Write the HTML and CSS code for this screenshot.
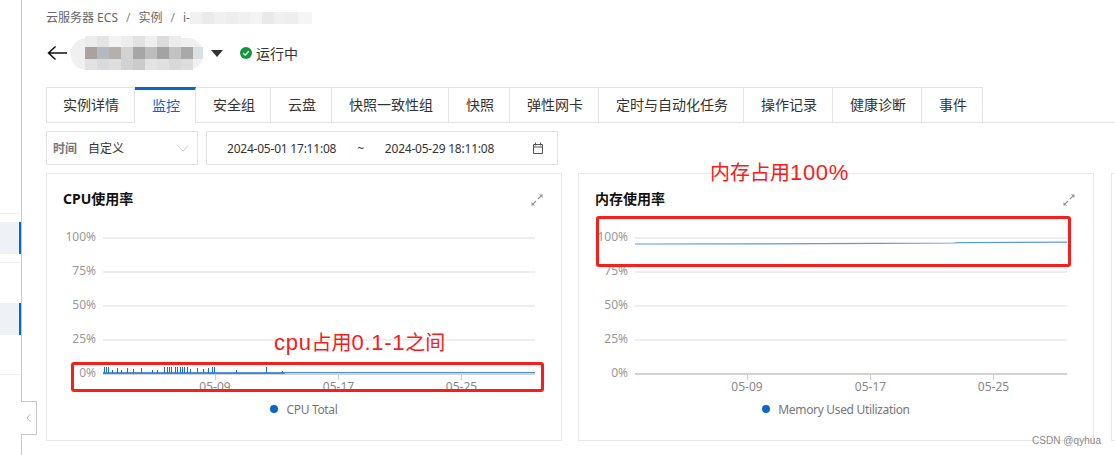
FILE: index.html
```html
<!DOCTYPE html>
<html lang="zh-CN">
<head>
<meta charset="utf-8">
<title>监控</title>
<link rel="stylesheet" href="styles.css">
</head>
<body>
<div class="page">
  <aside class="sidebar">
    <div class="side-row side-row-first"></div>
    <div class="side-item"></div>
    <div class="side-row side-row-mid"></div>
    <div class="side-item"></div>
    <div class="side-row side-row-last"></div>
    <div class="collapse">
      <svg width="6" height="10" viewBox="0 0 6 10"><path d="M4.5 1 1 5l3.5 4" fill="none" stroke="#bbb" stroke-width="1"/></svg>
    </div>
  </aside>
  <main class="main">
    <nav class="crumbs">
      <span>云服务器 ECS</span><span class="sep">/</span><span>实例</span><span class="sep">/</span><span>i-</span>
      <svg class="crumb-mosaic" width="124" height="12" viewBox="0 0 124 12">
        <rect width="12" height="12" fill="#f1f1f1"/><rect x="12" width="12" height="12" fill="#eaeaea"/><rect x="24" width="12" height="12" fill="#f0f0f0"/><rect x="36" width="12" height="12" fill="#ededed"/><rect x="48" width="12" height="12" fill="#f0f0f0"/><rect x="60" width="12" height="12" fill="#f3f3f3"/><rect x="72" width="12" height="12" fill="#e9e9e9"/><rect x="84" width="12" height="12" fill="#f0f0f0"/><rect x="96" width="12" height="12" fill="#eeeeee"/><rect x="108" width="14" height="12" fill="#f5f5f5"/>
      </svg>
    </nav>
    <header class="title-row">
      <svg class="back" width="20" height="16" viewBox="0 0 20 16"><path d="M20 8H2M8.5 1.5 1.5 8l7 6.500" fill="none" stroke="#111" stroke-width="1.500"/></svg>
      <svg class="mosaic" width="135" height="36" viewBox="0 0 135 36">
        <rect x="2" y="3" width="132" height="32" rx="15" fill="#f0f0f0"/>
        <rect x="16" y="1" width="12" height="11" fill="#ececec"/><rect x="28" y="1" width="12" height="11" fill="#e4e4e4"/><rect x="40" y="1" width="12" height="11" fill="#f3f3f3"/><rect x="52" y="1" width="12" height="11" fill="#ededed"/><rect x="64" y="1" width="12" height="11" fill="#e2e2e2"/><rect x="76" y="1" width="12" height="11" fill="#efefef"/><rect x="88" y="1" width="12" height="11" fill="#dcdcdc"/><rect x="100" y="1" width="12" height="11" fill="#ececec"/>
        <rect x="16" y="12" width="12" height="12" fill="#aaa29e"/><rect x="28" y="12" width="12" height="12" fill="#b4b9c0"/><rect x="40" y="12" width="12" height="12" fill="#b3b0ae"/><rect x="52" y="12" width="12" height="12" fill="#d2d2d2"/><rect x="64" y="12" width="12" height="12" fill="#a6a6a6"/><rect x="76" y="12" width="12" height="12" fill="#bcbcbc"/><rect x="88" y="12" width="12" height="12" fill="#a3a3a3"/><rect x="100" y="12" width="12" height="12" fill="#c2c2c2"/><rect x="112" y="12" width="12" height="12" fill="#a9a9a9"/><rect x="124" y="12" width="10" height="12" fill="#dde0e3"/>
        <rect x="16" y="24" width="12" height="11" fill="#e2e2e2"/><rect x="28" y="24" width="12" height="11" fill="#d9dadc"/><rect x="40" y="24" width="12" height="11" fill="#dedede"/><rect x="52" y="24" width="12" height="11" fill="#d2d2d2"/><rect x="64" y="24" width="12" height="11" fill="#cbcbcb"/><rect x="76" y="24" width="12" height="11" fill="#e3e3e3"/><rect x="88" y="24" width="12" height="11" fill="#e0e0e0"/><rect x="100" y="24" width="12" height="11" fill="#d8d8d8"/><rect x="112" y="24" width="12" height="11" fill="#dcdcdc"/>
      </svg>
      <svg class="caret" width="12" height="7" viewBox="0 0 12 7"><path d="M0 0h12L6 7z" fill="#333"/></svg>
      <svg class="status-dot" width="12" height="12" viewBox="0 0 12 12"><circle cx="6" cy="6" r="6" fill="#12963c"/><path d="M3.200 6.200 5.200 8 8.800 4.300" fill="none" stroke="#fff" stroke-width="1.300"/></svg>
      <span class="status-text">运行中</span>
    </header>
    <div class="tabs">
      <a class="tab">实例详情</a><a class="tab tab-active">监控</a><a class="tab">安全组</a><a class="tab">云盘</a><a class="tab">快照一致性组</a><a class="tab">快照</a><a class="tab">弹性网卡</a><a class="tab">定时与自动化任务</a><a class="tab">操作记录</a><a class="tab">健康诊断</a><a class="tab">事件</a>
    </div>
    <div class="filters">
      <div class="select">
        <span class="select-label">时间</span><span class="select-value">自定义</span>
        <svg class="chevron" width="12" height="7" viewBox="0 0 12 7"><path d="M1 .5 6 6l5-5.500" fill="none" stroke="#ccc"/></svg>
      </div>
      <div class="range">
        <span>2024-05-01 17:11:08</span><span class="tilde">~</span><span>2024-05-29 18:11:08</span>
        <svg class="calendar" width="12" height="12" viewBox="0 0 12 12"><path d="M1.500 2.500h9v9h-9zM1.500 5h9M3.500 .5v3M8.500 .5v3" fill="none" stroke="#555"/></svg>
      </div>
    </div>
    <div class="cards">
      <section class="card">
        <div class="card-head">
          <h3 class="card-title">CPU使用率</h3>
          <svg class="expand" width="12" height="12" viewBox="0 0 12 12"><path d="M7 5 11 1M5 7 1 11" stroke="#999" stroke-width="1.200"/><path d="M8 .5h3.500V4zM4 11.500H.5V8z" fill="#999"/></svg>
        </div>
        <svg class="chart" width="514" height="176" viewBox="0 0 514 176">
          <g class="grid"><path d="M56 18H488M56 52H488M56 86H488M56 120H488"/></g>
          <path class="axis" d="M56 154H488"/><path class="ticks" d="M168.500 155v5M291.500 155v5M414.500 155v5"/>
          <g class="ylabels"><text x="49" y="21">100%</text><text x="49" y="55">75%</text><text x="49" y="89">50%</text><text x="49" y="123">25%</text><text x="49" y="157">0%</text></g>
          <g class="xlabels"><text x="168" y="171">05-09</text><text x="291.500" y="171">05-17</text><text x="414.500" y="171">05-25</text></g>
          <path class="cpu-spikes" d="M57.500 153v-6M59.500 153v-6M61.500 153v-6M65.500 153v-3M70.500 153v-5M74.500 153v-3M80.500 153v-5M86.500 153v-4M94.500 153v-5M105.500 153v-3M110.500 153v-3M117.500 153v-6M120.500 153v-6M122.500 153v-6M124.500 153v-6M128.500 153v-6M130.500 153v-6M133.500 153v-6M135.500 153v-6M137.500 153v-6M140.500 153v-6M143.500 153v-4M150.500 153v-5M156.500 153v-4M161.500 153v-5M165.500 153v-6M167.500 153v-6M189.500 153v-3M219.500 153v-6M235.500 153v-2"/>
          <path class="cpu-line" d="M56 153H238"/>
          <path class="cpu-line-light" d="M238 152.500H488"/>
        </svg>
        <div class="legend"><i class="legend-dot"></i><span>CPU Total</span></div>
      </section>
      <section class="card">
        <div class="card-head">
          <h3 class="card-title">内存使用率</h3>
          <svg class="expand" width="12" height="12" viewBox="0 0 12 12"><path d="M7 5 11 1M5 7 1 11" stroke="#999" stroke-width="1.200"/><path d="M8 .5h3.500V4zM4 11.500H.5V8z" fill="#999"/></svg>
        </div>
        <svg class="chart" width="514" height="176" viewBox="0 0 514 176">
          <g class="grid"><path d="M56 18H488M56 52H488M56 86H488M56 120H488"/></g>
          <path class="axis" d="M56 154H488"/><path class="ticks" d="M168.500 155v5M291.500 155v5M414.500 155v5"/>
          <g class="ylabels"><text x="49" y="21">100%</text><text x="49" y="55">75%</text><text x="49" y="89">50%</text><text x="49" y="123">25%</text><text x="49" y="157">0%</text></g>
          <g class="xlabels"><text x="168" y="171">05-09</text><text x="291.500" y="171">05-17</text><text x="414.500" y="171">05-25</text></g>
          <path class="mem-line" d="M56 24 180 23.800 300 23.400 375 23 380 22.600 488 22.200"/>
        </svg>
        <div class="legend"><i class="legend-dot"></i><span>Memory Used Utilization</span></div>
      </section>
      <section class="card card-next"></section>
    </div>
  </main>
  <div class="note note-mem">内存占用<span class="note-num">100%</span></div>
  <div class="note note-cpu"><span class="note-num">cpu</span>占用<span class="note-num">0.1-1</span>之间</div>
  <div class="mark mark-cpu"></div>
  <div class="mark mark-mem"></div>
  <div class="watermark">CSDN @qyhua</div>
</div>
</body>
</html>
```
FILE: styles.css
```css
* { box-sizing: border-box; }
html, body { margin: 0; padding: 0; background: #fff; }
body { font-family: "Noto Sans", "Noto Sans CJK SC", sans-serif; color: #333; }
.page { position: relative; display: flex; width: 1115px; height: 455px; overflow: hidden; background: #fff; }

.sidebar { position: relative; flex: none; width: 22px; height: 455px; border-right: 1px solid #c9c9c9; }
.side-row-first { height: 214px; border-bottom: 1px solid #f1f1f1; margin-bottom: 8px; }
.side-item { height: 32px; background: #eef1f6; border-right: 2px solid #0a66c8; }
.side-row-mid { height: 41px; margin-top: 8px; border-top: 1px solid #f1f1f1; }
.side-row-last { height: 40px; border-bottom: 1px solid #f1f1f1; }
.collapse { position: absolute; left: 21px; top: 401px; width: 16px; height: 34px; display: flex; align-items: center; justify-content: center; background: #fff; border: 1px solid #c9c9c9; border-left: 0; }

.main { flex: none; width: 1093px; padding-left: 24px; }
.crumbs { display: flex; align-items: center; height: 12px; margin-top: 12px; font-size: 12px; line-height: 12px; color: #666; }
.sep { margin: 0 8px; color: #888; }
.title-row { display: flex; align-items: center; height: 36px; margin-top: 11px; }
.back { flex: none; margin-left: 1px; }
.mosaic { flex: none; margin-left: 2px; margin-right: 7px; }
.caret { flex: none; margin-top: 1px; }
.status-dot { flex: none; margin-left: 17px; }
.status-text { margin-left: 4px; font-size: 14px; color: #333; }

.tabs { display: flex; height: 36px; margin-top: 16px; margin-right: -2px; border-bottom: 1px solid #e3e3e3; }
.tab { flex: none; height: 36px; padding: 0 15px 0 17px; border: 1px solid #e3e3e3; border-left: 0; font-size: 14px; line-height: 34px; color: #333; background: #fff; }
.tab:first-child { border-left: 1px solid #e3e3e3; padding: 0 15px 0 16px; }
.tab-active { color: #0a66c8; border-top: 3px solid #0a66c8; border-bottom-color: #fff; line-height: 31px; }

.filters { display: flex; gap: 8px; margin-top: 8px; }
.select, .range { display: flex; align-items: center; height: 34px; border: 1px solid #e3e3e3; font-size: 12px; color: #333; }
.select { width: 152px; padding-left: 6px; }
.select-label { color: #777; font-weight: 600; }
.select-value { margin-left: 11px; }
.chevron { margin-left: auto; margin-right: 8px; }
.range { width: 352px; padding-left: 20px; padding-right: 13px; letter-spacing: -.22px; }
.tilde { margin: 0 21px; }
.calendar { margin-left: auto; }

.cards { display: flex; gap: 16px; margin-top: 8px; }
.card { flex: none; width: 516px; height: 268px; border: 1px solid #e8e8e8; }
.card-next { margin-left: 1px; }
.card-head { display: flex; align-items: center; justify-content: space-between; height: 22px; margin-top: 13px; padding-left: 16px; padding-right: 18px; }
.card-title { margin: 0; font-size: 14px; font-weight: 700; color: #111; }
.expand { flex: none; margin-top: 4px; }
.chart { display: block; margin-top: 11px; }
.grid path { fill: none; stroke: #eee; stroke-width: 2; }
.axis { fill: none; stroke: #d2d2d2; stroke-width: 2; }
.ticks { fill: none; stroke: #ccc; stroke-width: 1; }
.ylabels text { font-size: 12px; fill: #999; text-anchor: end; }
.xlabels text { font-size: 12px; fill: #888; text-anchor: middle; }
.cpu-spikes { fill: none; stroke: #1a6fc9; stroke-width: 1; }
.cpu-line { fill: none; stroke: #1a6fc9; stroke-width: 1.500; }
.cpu-line-light { fill: none; stroke: #4f90d6; stroke-width: 1; }
.mem-line { fill: none; stroke: #5b9bdc; stroke-width: 1.200; }
.legend { display: flex; align-items: center; justify-content: center; gap: 8px; height: 16px; margin-top: 5px; font-size: 12px; color: #777; letter-spacing: -.33px; }
.legend-dot { flex: none; width: 8px; height: 8px; border-radius: 50%; background: #0a66c8; }

.note { position: absolute; font-size: 20px; line-height: 26px; color: #f5201c; white-space: nowrap; font-family: "Liberation Sans", "Noto Sans CJK SC", sans-serif; }
.note-num { font-size: 22px; letter-spacing: .7px; }
.note-mem { left: 710px; top: 160px; }
.note-cpu { left: 274px; top: 330px; }
.mark { position: absolute; border: 3px solid #f5201c; border-radius: 3px; }
.mark-cpu { left: 71px; top: 362px; width: 473px; height: 30px; }
.mark-mem { left: 596px; top: 216px; width: 475px; height: 51px; }
.watermark { position: absolute; left: 1032px; top: 434px; font-size: 10px; line-height: 14px; color: #8a8a8a; font-family: "Liberation Sans", sans-serif; letter-spacing: .05px; }
```
